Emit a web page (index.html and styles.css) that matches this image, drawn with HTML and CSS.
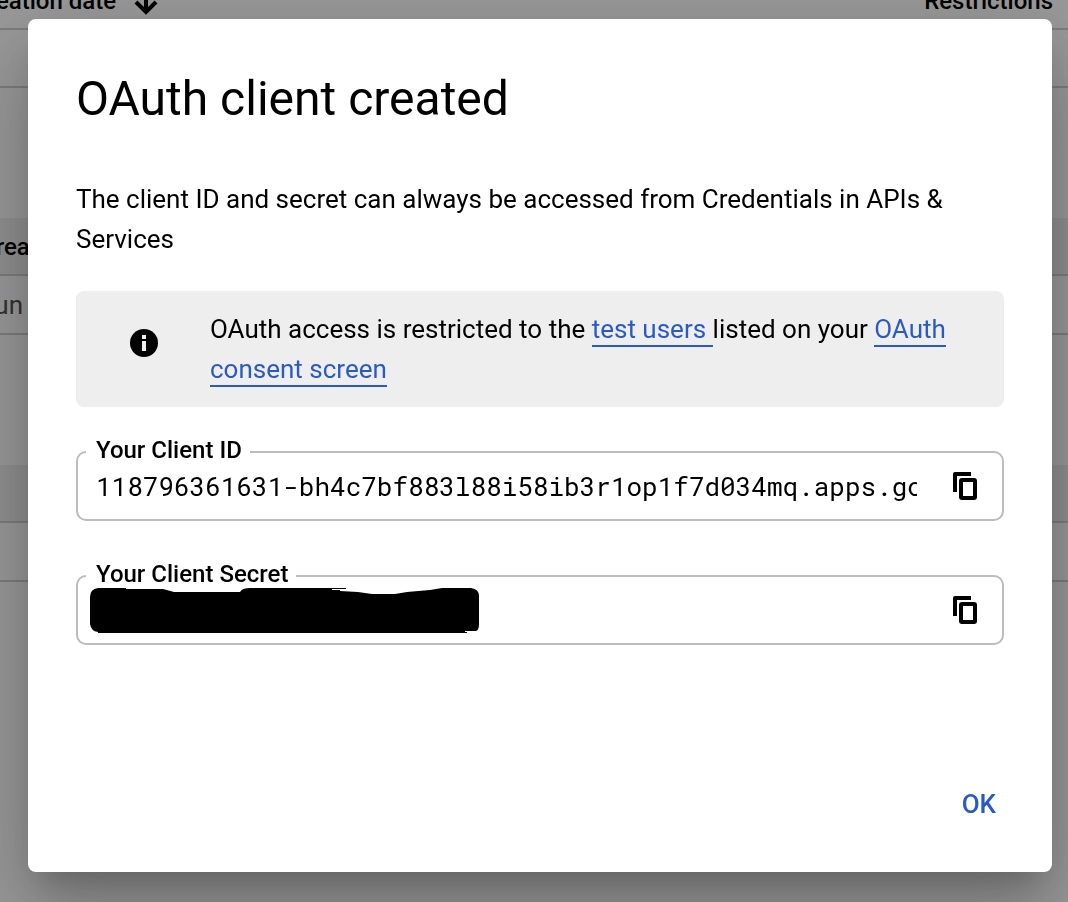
FILE: index.html
```html
<!DOCTYPE html>
<html lang="en">
<head>
<meta charset="utf-8">
<meta name="viewport" content="width=device-width, initial-scale=1">
<title>OAuth client created</title>
<link rel="stylesheet" href="styles.css">
</head>
<body>
<div class="page" aria-hidden="true">
  <table class="list">
    <thead><tr>
      <th class="date-col date-sorted">Creation date
        <svg class="sort-arrow" viewBox="0 0 24 24"><path d="M12 1v20M2 11l10 10 10-10" fill="none" stroke="currentColor" stroke-width="4"/></svg>
      </th>
      <th class="restrictions">Restrictions</th>
    </tr></thead>
    <tbody><tr><td></td><td></td></tr></tbody>
  </table>
  <table class="list list-shaded">
    <thead><tr><th class="date-col">Creation date</th><th></th></tr></thead>
    <tbody><tr><td class="date-col">Jun</td><td></td></tr></tbody>
  </table>
  <table class="list list-shaded">
    <thead><tr><th></th><th></th></tr></thead>
    <tbody><tr><td></td><td></td></tr></tbody>
  </table>
</div>

<div class="backdrop">
  <section class="dialog" role="dialog" aria-modal="true" aria-labelledby="dialog-title">
    <h1 class="title" id="dialog-title">OAuth client created</h1>
    <p class="intro">The client ID and secret can always be accessed from Credentials in APIs &amp; Services</p>
    <div class="notice">
      <span class="notice-icon">
        <svg viewBox="0 0 28 28" width="28" height="28" aria-hidden="true"><circle cx="14" cy="14" r="14"/><path d="M12 6h4v4h-4zM12 12h4v10h-4z" fill="#eee"/></svg>
      </span>
      <p class="notice-text">OAuth access is restricted to the <a class="link" href="#users">test users </a>listed on your <a class="link" href="#consent">OAuth consent screen</a></p>
    </div>
    <div class="fields">
      <fieldset class="field">
        <legend class="legend"><label for="client-id">Your Client ID</label></legend>
        <div class="field-row">
          <input class="value" id="client-id" type="text" readonly value="118796361631-bh4c7bf883l88i58ib3r1op1f7d034mq.apps.googleusercontent.com">
          <button class="copy" type="button" aria-label="Copy client ID">
            <svg viewBox="0 0 24 28" width="24" height="28"><path d="M0 20V2a2 2 0 0 1 2-2h16v4H4v16z"/><rect x="8" y="8" width="14" height="18" rx="1" fill="none" stroke="#000" stroke-width="4"/></svg>
          </button>
        </div>
      </fieldset>
      <fieldset class="field">
        <legend class="legend"><label for="client-secret">Your Client Secret</label></legend>
        <div class="field-row">
          <input class="value" id="client-secret" type="text" readonly>
          <svg class="redaction" viewBox="0 0 390 45" aria-hidden="true"><path d="M0 9Q0 1 8 0H36V1H73L84 4H150Q152 0 160 0H256V1H242V2H250V3L268 4L282 6H305L317 4L340 2L352 0H381Q389 1 389 8V36Q389 42 386 43H375V44H377V45H8V44Q1 43 0 36Z"/></svg>
          <button class="copy" type="button" aria-label="Copy client secret">
            <svg viewBox="0 0 24 28" width="24" height="28"><path d="M0 20V2a2 2 0 0 1 2-2h16v4H4v16z"/><rect x="8" y="8" width="14" height="18" rx="1" fill="none" stroke="#000" stroke-width="4"/></svg>
          </button>
        </div>
      </fieldset>
    </div>
    <div class="actions"><button class="ok" type="button">OK</button></div>
  </section>
</div>
</body>
</html>
```
FILE: styles.css
```css
* { box-sizing: border-box; }

html, body { height: 100%; }

body {
  margin: 0;
  overflow: hidden;
  background: #fff;
  color: #000;
  font: 400 26px/40px Roboto, sans-serif;
}

p, h1 { margin: 0; }

/* Scrolled page behind the dialog */
.page {
  display: flex;
  flex-direction: column;
  gap: 130px;
  height: 100%;
  margin: -28px 0 0 -28px;
}

.list {
  width: 100%;
  table-layout: fixed;
  border-collapse: separate;
  border-spacing: 0;
}

.list th, .list td {
  height: 58px;
  padding: 0;
  border-bottom: 2px solid #d0d0d0;
  text-align: left;
  white-space: nowrap;
}

.list th {
  padding-top: 2px;
  font-size: 24px;
  font-weight: 500;
}

.list td { color: #555; }
.list-shaded th { background: #f0f0f0; }
.list-shaded td { height: 59px; }
.list-shaded .date-col { padding-left: 8px; }
.list .restrictions { padding-right: 15px; text-align: right; }

.sort-arrow {
  width: 24px;
  height: 24px;
  margin-left: 12px;
  vertical-align: middle;
}

.backdrop {
  position: fixed;
  inset: 0;
  display: flex;
  padding: 19px 16px 30px 28px;
  background: rgba(0, 0, 0, 0.4);
}

.dialog {
  display: flex;
  flex: 1;
  flex-direction: column;
  min-width: 0;
  padding: 48px;
  border-radius: 8px;
  background: #fff;
  box-shadow:
    0 22px 30px -14px rgba(0, 0, 0, 0.2),
    0 48px 76px 6px rgba(0, 0, 0, 0.14),
    0 18px 92px 16px rgba(0, 0, 0, 0.12);
}

.title {
  margin-bottom: 48px;
  font-size: 48px;
  font-weight: 400;
  line-height: 64px;
}

.notice {
  display: flex;
  gap: 46px;
  margin-top: 32px;
  padding: 18px 48px;
  border-radius: 8px;
  background: #eee;
}

.notice-icon {
  display: flex;
  flex: none;
  align-items: center;
  justify-content: center;
  width: 40px;
  height: 68px;
}

.link {
  padding-bottom: 1px;
  border-bottom: 2px solid #2a5bc4;
  color: #2a5bc4;
  text-decoration: none;
}

.fields {
  display: flex;
  flex-direction: column;
  gap: 41px;
  margin-top: 31px;
}

.field {
  min-width: 0;
  margin: 0;
  padding: 0 25px 14px 8px;
  border: 2px solid #bdbdbd;
  border-radius: 10px;
}

.legend {
  padding: 0 8px 4px 10px;
  font-size: 24px;
  font-weight: 500;
  line-height: 24px;
}

.field-row {
  position: relative;
  display: flex;
  align-items: center;
  gap: 36px;
  padding-left: 10px;
}

.value {
  flex: 1;
  min-width: 0;
  height: 39px;
  padding: 0;
  border: 0;
  outline: 0;
  background: none;
  color: #000;
  font: 26px/38px "Roboto Mono", "DejaVu Sans Mono", monospace;
}

/* Black marker stroke lying over the secret */
.redaction {
  position: absolute;
  top: -2px;
  left: 4px;
  width: 390px;
  height: 45px;
}

.copy {
  display: flex;
  flex: none;
  padding: 0;
  border: 0;
  background: none;
  cursor: pointer;
}

.actions {
  display: flex;
  justify-content: flex-end;
  margin-top: auto;
}

.ok {
  padding: 0 8px;
  border: 0;
  background: none;
  color: #2a5bc4;
  font: 500 26px/40px Roboto, sans-serif;
  cursor: pointer;
}
```
